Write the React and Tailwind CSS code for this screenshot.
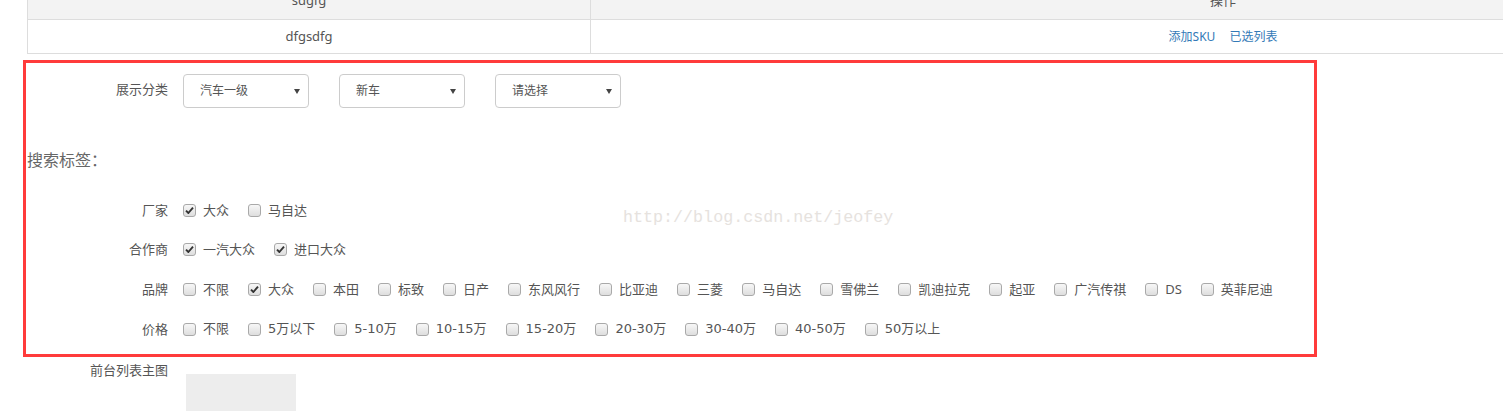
const font = { fontFamily: '"Noto Sans", "Noto Sans CJK SC", sans-serif' }
const wideDigits = { fontFamily: '"DejaVu Sans", "Noto Sans CJK SC", sans-serif' }

const brands = [
  ['不限', false], ['大众', true], ['本田', false], ['标致', false], ['日产', false],
  ['东风风行', false], ['比亚迪', false], ['三菱', false], ['马自达', false], ['雪佛兰', false],
  ['凯迪拉克', false], ['起亚', false], ['广汽传祺', false], ['DS', false], ['英菲尼迪', false],
]

const prices = ['不限', '5万以下', '5-10万', '10-15万', '15-20万', '20-30万', '30-40万', '40-50万', '50万以上']

function Box({ checked }) {
  return (
    <span className="w-[13px] h-[13px] shrink-0 rounded-[3px] border border-[#a9a9a9] bg-gradient-to-b from-[#f7f7f7] to-[#dedede] flex items-center justify-center">
      {checked && (
        <svg width="9" height="9" viewBox="0 0 9 9">
          <path d="M1 4.6 L3.4 7 L8 1.6" fill="none" stroke="#333" strokeWidth="1.9" strokeLinejoin="round" />
        </svg>
      )}
    </span>
  )
}

function Check({ text, checked, textStyle }) {
  return (
    <label className="flex items-center mr-[19px]">
      <Box checked={checked} />
      <span className="ml-[7px] text-[13px] text-[#555] leading-[20px] whitespace-nowrap" style={textStyle}>{text}</span>
    </label>
  )
}

function TagRow({ label, items, className = '', textStyle }) {
  return (
    <div className={`flex items-center h-[20px] ${className}`}>
      <div className="w-[142px] text-right text-[13px] text-[#555] leading-[20px]">{label}</div>
      <div className="flex items-center ml-[15px]">
        {items.map(([t, c]) => <Check key={t} text={t} checked={c} textStyle={textStyle} />)}
      </div>
    </div>
  )
}

function Select({ value }) {
  return (
    <div className="w-[126px] h-[34px] rounded-[4px] border border-[#ccc] bg-white flex items-center justify-between pl-[16px] pr-[7px]">
      <span className="text-[12px] text-[#555]">{value}</span>
      <svg width="6" height="6" viewBox="0 0 6 6" className="mr-[1px]">
        <path d="M0 1 L6 1 L3 6 Z" fill="#444" />
      </svg>
    </div>
  )
}

export default function App() {
  return (
    <div className="relative w-[1503px] h-[411px] overflow-hidden bg-white" style={font}>
      {/* table */}
      <div className="ml-[27px] w-[1828px] border-l border-[#ddd] text-[13px] text-[#555]">
        <div className="flex h-[37px] -mt-[17px] bg-[#f3f3f3] border-b border-[#ddd]">
          <div className="w-[563px] border-r border-[#ddd] flex items-center justify-center">sdgfg</div>
          <div className="flex-1 flex items-center justify-center">操作</div>
        </div>
        <div className="flex h-[34px] border-b border-[#ddd]">
          <div className="w-[563px] border-r border-[#ddd] flex items-center justify-center">dfgsdfg</div>
          <div className="flex-1 flex items-center justify-center gap-[14px] text-[12px] text-[#337ab7]">
            <span>添加SKU</span>
            <span>已选列表</span>
          </div>
        </div>
      </div>

      {/* highlighted form */}
      <div className="mt-[6px] ml-[23px] w-[1294px] h-[297px] border-[3px] border-[#ff3b3b] pt-[11px]">
        <div className="flex items-center h-[34px]">
          <div className="w-[142px] text-right text-[13px] text-[#555] -mt-[2px]">展示分类</div>
          <div className="flex gap-[30px] ml-[15px]">
            <Select value="汽车一级" />
            <Select value="新车" />
            <Select value="请选择" />
          </div>
        </div>
        <div className="mt-[41px] pl-[1px] text-[16px] leading-[22px] text-[#666]">搜索标签：</div>
        <TagRow className="mt-[29px]" label="厂家" items={[['大众', true], ['马自达', false]]} />
        <TagRow className="mt-[19px]" label="合作商" items={[['一汽大众', true], ['进口大众', true]]} />
        <TagRow className="mt-[20px]" label="品牌" items={brands} />
        <TagRow className="mt-[20px]" label="价格" items={prices.map((p) => [p, false])} textStyle={wideDigits} />
      </div>

      {/* below */}
      <div className="flex items-start ml-[23px] mt-[5px]">
        <div className="w-[145px] text-right text-[13px] leading-[16px] text-[#555]">前台列表主图</div>
        <div className="ml-[18px] mt-[12px] w-[110px] h-[40px] bg-[#ededed]" />
      </div>

      {/* watermark */}
      <div className="absolute left-[623px] top-[205px] text-[16.7px] text-[#e6e2de] pointer-events-none" style={{ fontFamily: '"Liberation Mono", monospace' }}>
        http://blog.csdn.net/jeofey
      </div>
    </div>
  )
}
